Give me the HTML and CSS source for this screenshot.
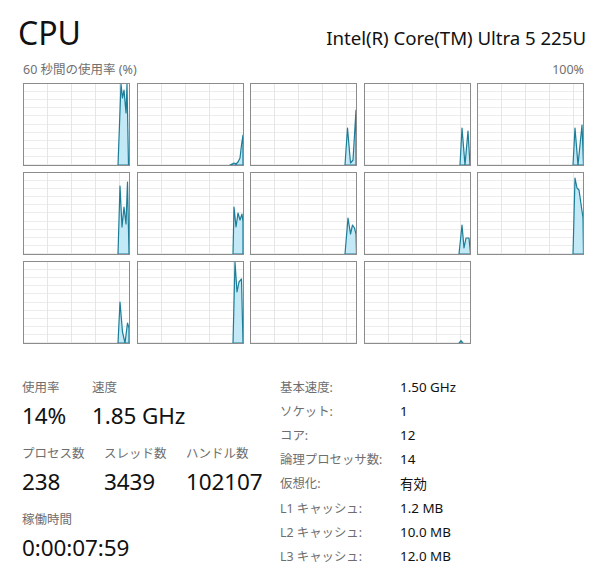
FILE: index.html
```html
<!DOCTYPE html>
<html lang="ja">
<head>
<meta charset="utf-8">
<title>CPU</title>
<link rel="stylesheet" href="styles.css">
</head>
<body>
<div class="page">
  <header class="header">
    <div class="title">CPU</div>
    <div class="model">Intel(R) Core(TM) Ultra 5 225U</div>
  </header>

  <section class="graphs">
    <div class="caption">
      <span>60 秒間の使用率 (%)</span>
      <span>100%</span>
    </div>
    <div class="grid">
      <div class="cell"><svg viewBox="1 1 105 81" preserveAspectRatio="none"><path d="M95 82 L98 1 L99.5 15 L101 7 L103 30 L104 1 L105.5 82 Z"/></svg></div>
      <div class="cell"><svg viewBox="1 1 105 81" preserveAspectRatio="none"><path d="M93 82 L97 80 L99 81 L101 79 L103 75 L104.5 62 L106 52 L106 82 Z"/></svg></div>
      <div class="cell"><svg viewBox="1 1 105 81" preserveAspectRatio="none"><path d="M95 82 L97.5 45 L100.5 80 L103 77 L106 27 L106 82 Z"/></svg></div>
      <div class="cell"><svg viewBox="1 1 105 81" preserveAspectRatio="none"><path d="M96 82 L98 45 L101 82 L104 48 L106 82 Z"/></svg></div>
      <div class="cell"><svg viewBox="1 1 105 81" preserveAspectRatio="none"><path d="M96 82 L98 45 L101 82 L105 42 L106.5 82 Z"/></svg></div>

      <div class="cell"><svg viewBox="1 1 105 81" preserveAspectRatio="none"><path d="M95 82 L97 14 L99 55 L101 35 L103 52 L104.5 10 L106 82 Z"/></svg></div>
      <div class="cell"><svg viewBox="1 1 105 81" preserveAspectRatio="none"><path d="M96 82 L97 35 L99 55 L101 41 L103 48 L105 42 L106 50 L106 82 Z"/></svg></div>
      <div class="cell"><svg viewBox="1 1 105 81" preserveAspectRatio="none"><path d="M95 82 L98 46 L100.5 62 L102.5 53 L104.5 56 L106 62 L106.5 82 Z"/></svg></div>
      <div class="cell"><svg viewBox="1 1 105 81" preserveAspectRatio="none"><path d="M95 82 L98 53 L100 76 L102 66 L105 66 L106.5 82 Z"/></svg></div>
      <div class="cell"><svg viewBox="1 1 105 81" preserveAspectRatio="none"><path d="M96 82 L98 6 L100 16 L102 18 L106 46 L106.5 82 Z"/></svg></div>

      <div class="cell"><svg viewBox="1 1 105 81" preserveAspectRatio="none"><path d="M95 82 L97 41 L99.5 71 L102 82 L104.5 62 L106 67 L106 82 Z"/></svg></div>
      <div class="cell"><svg viewBox="1 1 105 81" preserveAspectRatio="none"><path d="M96 82 L98 1 L100 31 L102 21 L104.5 18 L106 82 Z"/></svg></div>
      <div class="cell"><svg viewBox="1 1 105 81" preserveAspectRatio="none"></svg></div>
      <div class="cell"><svg viewBox="1 1 105 81" preserveAspectRatio="none"><path d="M95 82 L97 79.5 L99 82 Z"/></svg></div>
    </div>
  </section>

  <section class="stats">
    <div class="left">
      <div class="row">
        <div class="stat w70"><div class="label">使用率</div><div class="value">14%</div></div>
        <div class="stat"><div class="label">速度</div><div class="value">1.85 GHz</div></div>
      </div>
      <div class="row">
        <div class="stat w82"><div class="label">プロセス数</div><div class="value">238</div></div>
        <div class="stat w82"><div class="label">スレッド数</div><div class="value">3439</div></div>
        <div class="stat"><div class="label">ハンドル数</div><div class="value">102107</div></div>
      </div>
      <div class="row">
        <div class="stat"><div class="label">稼働時間</div><div class="value">0:00:07:59</div></div>
      </div>
    </div>
    <dl class="specs">
      <dt>基本速度:</dt><dd>1.50 GHz</dd>
      <dt>ソケット:</dt><dd>1</dd>
      <dt>コア:</dt><dd>12</dd>
      <dt>論理プロセッサ数:</dt><dd>14</dd>
      <dt>仮想化:</dt><dd>有効</dd>
      <dt>L1 キャッシュ:</dt><dd>1.2 MB</dd>
      <dt>L2 キャッシュ:</dt><dd>10.0 MB</dd>
      <dt>L3 キャッシュ:</dt><dd>12.0 MB</dd>
    </dl>
  </section>
</div>
</body>
</html>
```

FILE: styles.css
```css
* { box-sizing: border-box; }
html, body { margin: 0; padding: 0; background: #ffffff; }
body {
  font-family: "Noto Sans", "Noto Sans CJK JP", sans-serif;
  color: #000;
  width: 600px;
  height: 574px;
  overflow: hidden;
}
.page { padding: 0 14px 0 22px; }

.header {
  display: flex;
  justify-content: space-between;
  align-items: baseline;
  padding-top: 13px;
  margin-left: -4px;
}
.title {
  font-size: 32px;
  line-height: 40px;
  color: #111;
}
.model {
  font-size: 18.7px;
  line-height: 24px;
  color: #111;
  letter-spacing: -0.05px;
}

.graphs { margin-top: 8px; }
.caption {
  display: flex;
  justify-content: space-between;
  font-size: 12.5px;
  line-height: 17px;
  color: #707070;
  padding: 0 2px 0 1px;
}
.grid {
  margin-top: 5px;
  margin-left: 1px;
  display: grid;
  grid-template-columns: repeat(5, 107px);
  grid-auto-rows: 83px;
  column-gap: 6.5px;
  row-gap: 6px;
}
.cell {
  border: 1px solid #8c8c8c;
  background-color: #fff;
  background-image:
    repeating-linear-gradient(to right, transparent 0 23px, #e6e6e6 23px 24px),
    repeating-linear-gradient(to bottom, transparent 0 7.1px, #ececec 7.1px 8.1px);
}
.cell svg {
  display: block;
  width: 105px;
  height: 81px;
}
.cell path {
  fill: #c3e9f6;
  stroke: #1c7d98;
  stroke-width: 1.2;
  stroke-linejoin: round;
}

.stats {
  display: flex;
  margin-top: 34px;
}
.left { width: 258px; }
.row { display: flex; margin-bottom: 9px; }
.stat.w70 { width: 70px; }
.stat.w82 { width: 82px; }
.label {
  font-size: 12.5px;
  line-height: 20px;
  color: #6e6e6e;
}
.value {
  font-size: 22.5px;
  line-height: 38px;
  color: #111;
  margin-top: -1px;
  letter-spacing: -0.1px;
}

.specs {
  margin: -3px 0 0 0;
  display: grid;
  grid-template-columns: 120px auto;
  grid-auto-rows: 24.1px;
  align-items: center;
  font-size: 13px;
}
.specs dt { color: #6e6e6e; font-size: 12.4px; }
.specs dd { margin: 0; color: #111; font-size: 13.4px; }
```
